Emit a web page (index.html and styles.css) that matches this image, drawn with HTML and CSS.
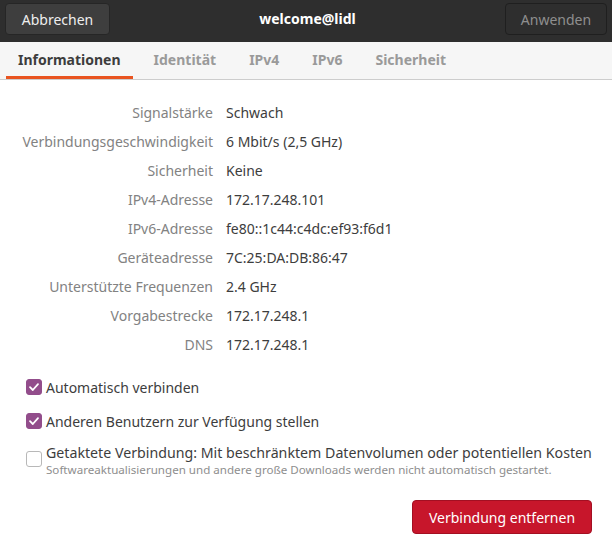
FILE: index.html
```html
<!DOCTYPE html>
<html lang="de">
<head>
<meta charset="utf-8">
<title>welcome@lidl</title>
<link rel="stylesheet" href="styles.css">
</head>
<body>
<div class="dialog">
  <header class="headerbar">
    <button class="hb-btn">Abbrechen</button>
    <div class="title">welcome@lidl</div>
    <button class="hb-btn disabled">Anwenden</button>
  </header>
  <nav class="tabs">
    <div class="tab active">Informationen</div>
    <div class="tab">Identität</div>
    <div class="tab">IPv4</div>
    <div class="tab">IPv6</div>
    <div class="tab">Sicherheit</div>
  </nav>
  <main class="content">
    <div class="info">
      <div class="label">Signalstärke</div><div class="value">Schwach</div>
      <div class="label">Verbindungsgeschwindigkeit</div><div class="value">6 Mbit/s (2,5 GHz)</div>
      <div class="label">Sicherheit</div><div class="value">Keine</div>
      <div class="label">IPv4-Adresse</div><div class="value">172.17.248.101</div>
      <div class="label">IPv6-Adresse</div><div class="value">fe80::1c44:c4dc:ef93:f6d1</div>
      <div class="label">Geräteadresse</div><div class="value">7C:25:DA:DB:86:47</div>
      <div class="label">Unterstützte Frequenzen</div><div class="value">2.4 GHz</div>
      <div class="label">Vorgabestrecke</div><div class="value">172.17.248.1</div>
      <div class="label">DNS</div><div class="value">172.17.248.1</div>
    </div>
    <div class="checks">
      <div class="check">
        <span class="box checked"><svg viewBox="0 0 16 16" width="16" height="16"><path d="M4 8.2 L6.8 11 L12 5.2" fill="none" stroke="#fff" stroke-width="1.8" stroke-linecap="round" stroke-linejoin="round"/></svg></span>
        <span class="ctext">Automatisch verbinden</span>
      </div>
      <div class="check">
        <span class="box checked"><svg viewBox="0 0 16 16" width="16" height="16"><path d="M4 8.2 L6.8 11 L12 5.2" fill="none" stroke="#fff" stroke-width="1.8" stroke-linecap="round" stroke-linejoin="round"/></svg></span>
        <span class="ctext">Anderen Benutzern zur Verfügung stellen</span>
      </div>
      <div class="check metered">
        <span class="box"></span>
        <div class="ctext">
          <div class="mtitle">Getaktete Verbindung: Mit beschränktem Datenvolumen oder potentiellen Kosten</div>
          <div class="sub">Softwareaktualisierungen und andere große Downloads werden nicht automatisch gestartet.</div>
        </div>
      </div>
    </div>
    <div class="actions">
      <button class="danger">Verbindung entfernen</button>
    </div>
  </main>
</div>
</body>
</html>
```
FILE: styles.css
```css
html, body {
  margin: 0;
  padding: 0;
  background: #ffffff;
}
body {
  font-family: "Noto Sans", "DejaVu Sans", sans-serif;
  font-size: 14px;
  color: #3d3d3d;
  width: 612px;
  height: 554px;
  overflow: hidden;
}
.dialog {
  display: flex;
  flex-direction: column;
  height: 554px;
}
.headerbar {
  height: 42px;
  box-sizing: border-box;
  background: #2e2e2e;
  display: flex;
  align-items: flex-start;
  justify-content: space-between;
  padding: 3px 5px 0 5px;
}
.hb-btn {
  font-family: inherit;
  font-size: 14px;
  height: 32px;
  border-radius: 4px;
  border: 1px solid #262626;
  background: #3e3e3e;
  color: #eeeeee;
  padding: 0 14px;
  width: 105px;
}
.hb-btn.disabled {
  background: #2e2e2e;
  border-color: #1f1f1f;
  color: #8e8e8e;
  width: 102px;
}
.title {
  color: #ffffff;
  font-weight: bold;
  font-size: 14px;
  line-height: 32px;
}
.tabs {
  height: 38px;
  box-sizing: border-box;
  background: #f6f6f6;
  border-bottom: 1px solid #cdcdcd;
  display: flex;
  padding-left: 6px;
}
.tab {
  font-weight: bold;
  font-size: 14px;
  color: #9a9a9a;
  padding: 0 12px;
  line-height: 36px;
  margin-right: 9px;
}
.tab.active {
  color: #3d3d3d;
  border-bottom: 3px solid #e95420;
}
.content {
  flex: 1;
  background: #ffffff;
  display: flex;
  flex-direction: column;
}
.info {
  display: grid;
  grid-template-columns: 213px auto;
  column-gap: 13px;
  grid-auto-rows: 29px;
  align-items: center;
  padding-top: 18px;
}
.label {
  text-align: right;
  color: #828282;
  white-space: nowrap;
}
.value {
  color: #3d3d3d;
  white-space: nowrap;
}
.checks {
  padding: 20px 0 0 26px;
  display: flex;
  flex-direction: column;
  gap: 18px;
}
.check {
  display: flex;
  align-items: center;
  gap: 4px;
  height: 16px;
}
.check.metered {
  align-items: flex-start;
  height: auto;
  margin-top: -4px;
}
.box {
  width: 16px;
  height: 16px;
  box-sizing: border-box;
  border-radius: 3px;
  border: 1px solid #b8b8b8;
  background: #fff;
  flex: none;
  display: flex;
}
.box.checked {
  background: #924d8b;
  border-color: #924d8b;
}
.box svg { margin: -1px; }
.metered .box { margin-top: 8px; }
.ctext {
  white-space: nowrap;
  color: #3d3d3d;
}
.mtitle {
  font-size: 14.2px;
  line-height: 19px;
}
.sub {
  font-size: 11.6px;
  color: #8e8e8e;
  line-height: 15px;
}
.actions {
  display: flex;
  justify-content: flex-end;
  padding: 23px 20px 0 0;
}
.danger {
  font-family: inherit;
  font-size: 14px;
  background: #c7162b;
  color: #ffffff;
  border: 1px solid #a30f22;
  border-radius: 4px;
  height: 34px;
  width: 180px;
}
```
